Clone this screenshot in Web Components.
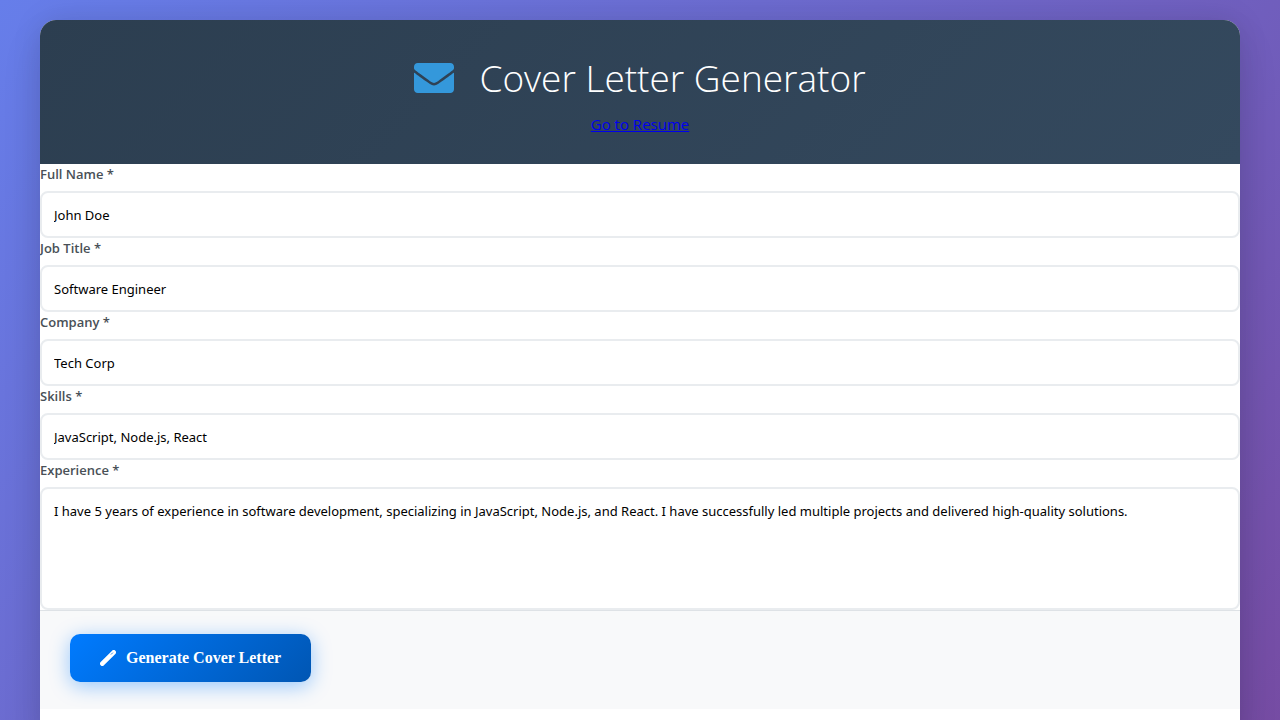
<!DOCTYPE html>
<html lang="en">
<head>
<meta charset="utf-8">
<meta name="viewport" content="width=device-width, initial-scale=1">
<title>Cover Letter Generator</title>
<style>
  * { box-sizing: border-box; }
  body {
    margin: 0;
    padding: 20px 40px;
    min-height: 100vh;
    font-family: "Segoe UI", "Open Sans", "Noto Sans", sans-serif;
    background: linear-gradient(135deg, #667eea 0%, #764ba2 100%);
  }
</style>
</head>
<body>
<letter-app></letter-app>

<template id="app-template">
  <style>
    :host {
      display: block;
      min-height: 100vh;
      background: #fff;
      border-radius: 16px;
      box-shadow: 0 20px 40px rgba(0, 0, 0, 0.1), 0 0 30px rgba(0, 0, 0, 0.1);
      overflow: hidden;
    }
    form { margin: 0; }
  </style>
  <page-header heading="Cover Letter Generator">
    <page-link href="#resume">Go to Resume</page-link>
  </page-header>
  <form>
    <text-field label="Full Name *" name="fullName" value="John Doe"></text-field>
    <text-field label="Job Title *" name="jobTitle" value="Software Engineer"></text-field>
    <text-field label="Company *" name="company" value="Tech Corp"></text-field>
    <text-field label="Skills *" name="skills" value="JavaScript, Node.js, React"></text-field>
    <text-field multiline label="Experience *" name="experience" value="I have 5 years of experience in software development, specializing in JavaScript, Node.js, and React. I have successfully led multiple projects and delivered high-quality solutions."></text-field>
    <form-actions><primary-button>Generate Cover Letter</primary-button></form-actions>
  </form>
</template>

<template id="header-template">
  <style>
    :host {
      display: flex;
      flex-direction: column;
      align-items: center;
      gap: 6px;
      padding: 30px 30px 28px;
      color: #fff;
      background: linear-gradient(135deg, #2c3e50, #34495e);
    }
    h1 {
      display: flex;
      align-items: center;
      gap: 25px;
      margin: 0;
      font-size: 37px;
      line-height: 56px;
      font-weight: 300;
    }
    svg { width: 40px; height: 40px; fill: #3498db; }
  </style>
  <h1>
    <svg viewBox="0 0 512 512" aria-hidden="true"><path d="M502.300 190.800c3.900-3.100 9.700-.2 9.700 4.700V400c0 26.500-21.500 48-48 48H48c-26.500 0-48-21.500-48-48V195.600c0-5 5.700-7.800 9.700-4.700 22.400 17.400 52.100 39.500 154.100 113.600 21.100 15.400 56.700 47.800 92.200 47.600 35.700.3 72-32.800 92.300-47.600 102-74.100 131.600-96.300 154-113.700zM256 320c23.200.4 56.600-29.200 73.400-41.400 132.700-96.300 142.800-104.700 173.400-128.700 5.800-4.500 9.200-11.500 9.200-18.900v-19c0-26.500-21.500-48-48-48H48c-26.500 0-48 21.500-48 48v19c0 7.400 3.400 14.300 9.200 18.900 30.600 23.900 40.700 32.400 173.400 128.700 16.800 12.200 50.200 41.800 73.400 41.400z"/></svg>
    <span></span>
  </h1>
  <slot></slot>
</template>

<template id="link-template">
  <style>
    :host { display: block; font-size: 15px; line-height: 24px; }
    a { color: #0000ee; text-decoration: underline; }
  </style>
  <a><slot></slot></a>
</template>

<template id="field-template">
  <style>
    :host { display: block; }
    label {
      display: block;
      padding-bottom: 7px;
      font-size: 13px;
      line-height: 20px;
      font-weight: 600;
      color: #495057;
    }
    input, textarea {
      display: block;
      box-sizing: border-box;
      width: 100%;
      height: 47px;
      margin: 0;
      padding: 12px;
      border: 2px solid #e9ecef;
      border-radius: 8px;
      outline: none;
      background: #fff;
      color: #000;
      font-family: "Segoe UI", "Noto Sans", "Open Sans", sans-serif;
      font-size: 13px;
      line-height: 20px;
    }
    textarea { height: 123px; resize: none; }
  </style>
  <label for="control"></label>
</template>

<template id="actions-template">
  <style>
    :host {
      display: flex;
      padding: 23px 30px 27px;
      border-top: 1px solid #dee2e6;
      background: #f8f9fa;
    }
  </style>
  <slot></slot>
</template>

<template id="button-template">
  <style>
    :host { display: block; }
    button {
      display: flex;
      align-items: center;
      gap: 10px;
      height: 48px;
      padding: 0 30px;
      border: 0;
      border-radius: 10px;
      color: #fff;
      background: linear-gradient(135deg, #007bff, #0056b3);
      box-shadow: 0 4px 20px rgba(0, 123, 255, 0.4);
      font: bold 16px "Liberation Serif", "Times New Roman", serif;
      cursor: pointer;
    }
    svg { width: 16px; height: 16px; }
  </style>
  <button type="button">
    <svg viewBox="0 0 16 16" aria-hidden="true">
      <path d="M2.300 13.700 13.700 2.300" stroke="#fff" stroke-width="4.600" stroke-linecap="round"/>
      <path d="M11.200 4.300 12.600 2.900" stroke="#0069d9" stroke-width=".8" stroke-linecap="round"/>
    </svg>
    <span><slot></slot></span>
  </button>
</template>

<script>
  class TemplateElement extends HTMLElement {
    constructor() {
      super();
      const template = document.getElementById(this.constructor.templateId);
      this.attachShadow({ mode: "open" }).append(template.content.cloneNode(true));
    }
  }

  class PageHeader extends TemplateElement {
    static templateId = "header-template";
    connectedCallback() {
      this.shadowRoot.querySelector("span").textContent = this.getAttribute("heading");
    }
  }

  class PageLink extends TemplateElement {
    static templateId = "link-template";
    connectedCallback() {
      this.shadowRoot.querySelector("a").href = this.getAttribute("href");
    }
  }

  class TextField extends TemplateElement {
    static templateId = "field-template";
    connectedCallback() {
      if (this.control) return;
      this.control = document.createElement(this.hasAttribute("multiline") ? "textarea" : "input");
      this.control.id = "control";
      this.control.name = this.getAttribute("name");
      this.control.required = true;
      this.control.spellcheck = false;
      this.control.value = this.getAttribute("value");
      this.shadowRoot.querySelector("label").textContent = this.getAttribute("label");
      this.shadowRoot.append(this.control);
    }
  }

  class FormActions extends TemplateElement {
    static templateId = "actions-template";
  }

  class PrimaryButton extends TemplateElement {
    static templateId = "button-template";
  }

  class LetterApp extends TemplateElement {
    static templateId = "app-template";
  }

  customElements.define("page-header", PageHeader);
  customElements.define("page-link", PageLink);
  customElements.define("text-field", TextField);
  customElements.define("form-actions", FormActions);
  customElements.define("primary-button", PrimaryButton);
  customElements.define("letter-app", LetterApp);
</script>
</body>
</html>
